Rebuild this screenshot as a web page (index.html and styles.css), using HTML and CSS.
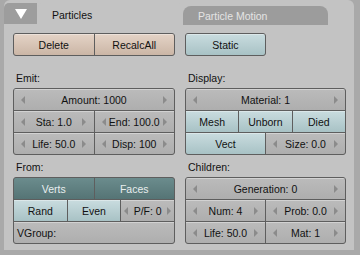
FILE: index.html
```html
<!DOCTYPE html>
<html lang="en">
<head>
    <meta charset="UTF-8">
    <title>Particles</title>
    <link rel="stylesheet" href="styles.css">
</head>
<body>

<div class="panel">
    <div class="tabs">
        <div class="tab-toggle">
            <svg width="12" height="10" viewBox="0 0 12 10"><polygon points="0,0 12,0 6,10" fill="#fff"/></svg>
        </div>
        <div class="tab tab-active">Particles</div>
        <div class="tab tab-inactive">Particle Motion</div>
    </div>

    <div class="body">
        <div class="col">
            <div class="group">
                <div class="row">
                    <div class="btn action">Delete</div>
                    <div class="btn action">RecalcAll</div>
                </div>
            </div>

            <div class="label">Emit:</div>
            <div class="group">
                <div class="row">
                    <div class="btn num"><span class="arr left"></span><span>Amount: 1000</span><span class="arr right"></span></div>
                </div>
                <div class="row">
                    <div class="btn num"><span class="arr left"></span><span>Sta: 1.0</span><span class="arr right"></span></div>
                    <div class="btn num"><span class="arr left"></span><span>End: 100.0</span><span class="arr right"></span></div>
                </div>
                <div class="row">
                    <div class="btn num"><span class="arr left"></span><span>Life: 50.0</span><span class="arr right"></span></div>
                    <div class="btn num"><span class="arr left"></span><span>Disp: 100</span><span class="arr right"></span></div>
                </div>
            </div>

            <div class="label label-low">From:</div>
            <div class="group">
                <div class="row">
                    <div class="btn toggle on">Verts</div>
                    <div class="btn toggle on">Faces</div>
                </div>
                <div class="row">
                    <div class="btn toggle">Rand</div>
                    <div class="btn toggle">Even</div>
                    <div class="btn num tight"><span class="arr left"></span><span>P/F: 0</span><span class="arr right"></span></div>
                </div>
                <div class="row">
                    <div class="btn field">VGroup:</div>
                </div>
            </div>
        </div>

        <div class="col">
            <div class="group static">
                <div class="row">
                    <div class="btn toggle">Static</div>
                </div>
            </div>

            <div class="label">Display:</div>
            <div class="group">
                <div class="row">
                    <div class="btn num"><span class="arr left"></span><span>Material: 1</span><span class="arr right"></span></div>
                </div>
                <div class="row">
                    <div class="btn toggle">Mesh</div>
                    <div class="btn toggle">Unborn</div>
                    <div class="btn toggle">Died</div>
                </div>
                <div class="row">
                    <div class="btn toggle">Vect</div>
                    <div class="btn num"><span class="arr left"></span><span>Size: 0.0</span><span class="arr right"></span></div>
                </div>
            </div>

            <div class="label label-low">Children:</div>
            <div class="group">
                <div class="row">
                    <div class="btn num"><span class="arr left"></span><span>Generation: 0</span><span class="arr right"></span></div>
                </div>
                <div class="row">
                    <div class="btn num"><span class="arr left"></span><span>Num: 4</span><span class="arr right"></span></div>
                    <div class="btn num"><span class="arr left"></span><span>Prob: 0.0</span><span class="arr right"></span></div>
                </div>
                <div class="row">
                    <div class="btn num"><span class="arr left"></span><span>Life: 50.0</span><span class="arr right"></span></div>
                    <div class="btn num"><span class="arr left"></span><span>Mat: 1</span><span class="arr right"></span></div>
                </div>
            </div>
        </div>
    </div>
</div>

</body>
</html>
```

FILE: styles.css
```css
body {
    margin: 0;
    padding: 0;
    background-color: #a9a9a9;
    font-family: 'Liberation Sans', Arial, sans-serif;
    font-size: 10.5px;
    color: #111;
}

.panel {
    width: 350px;
    height: 250px;
    margin-left: 4px;
    background-color: #c3c3c3;
    border-radius: 6px 6px 0 0;
    box-sizing: border-box;
    overflow: hidden;
}

.tabs {
    display: flex;
    height: 25px;
}

.tab-toggle {
    width: 33px;
    height: 21px;
    margin-top: 3px;
    background-color: #9d9d9d;
    border-radius: 5px 0 0 0;
    display: flex;
    justify-content: center;
    align-items: center;
}

.tab {
    display: flex;
    align-items: center;
    padding-left: 15px;
    box-sizing: border-box;
}

.tab-active {
    width: 146px;
    margin-top: 3px;
    background-color: #c3c3c3;
    border-radius: 7px 7px 0 0;
    color: #111;
    padding-top: 1px;
}

.tab-inactive {
    width: 145px;
    margin-top: 6px;
    background-color: #9c9c9c;
    border-radius: 8px 8px 0 0;
    color: #e4e4e4;
}

.body {
    display: grid;
    grid-template-columns: 162px 161px;
    column-gap: 10px;
    padding: 8px 9px 0 9px;
}

.col {
    display: flex;
    flex-direction: column;
}

.group {
    display: flex;
    flex-direction: column;
    gap: 1px;
    background-color: #5e5e5e;
    border: 1px solid #5e5e5e;
    border-radius: 3px;
    overflow: hidden;
}

.static {
    width: 79px;
}

.row {
    display: grid;
    grid-auto-flow: column;
    grid-auto-columns: minmax(0, 1fr);
    gap: 1px;
    height: 21px;
}

.btn {
    display: flex;
    align-items: center;
    justify-content: center;
    white-space: nowrap;
    overflow: hidden;
    box-shadow: inset 0 1px rgba(255, 255, 255, 0.35);
}

.action {
    background: linear-gradient(#e4d3c6, #cbb6a6);
}

.toggle {
    background: linear-gradient(#c9dcdf, #a8c2c5);
}

.toggle.on {
    background: linear-gradient(#6b8c8d, #557475);
    color: #e8eeee;
    box-shadow: none;
}

.num,
.field {
    background: linear-gradient(#bbbbbb, #aeaeae);
}

.num {
    justify-content: space-between;
    padding: 0 7px;
}

.num.tight {
    padding: 0 3px;
}

.field {
    justify-content: flex-start;
    padding-left: 3px;
}

.arr {
    width: 0;
    height: 0;
    border-top: 4px solid transparent;
    border-bottom: 4px solid transparent;
}

.arr.left {
    border-right: 4px solid #8b8b8b;
}

.arr.right {
    border-left: 4px solid #8b8b8b;
}

.label {
    height: 32px;
    box-sizing: border-box;
    display: flex;
    align-items: flex-end;
    padding: 0 0 4px 3px;
}

.label-low {
    height: 22px;
}
```
